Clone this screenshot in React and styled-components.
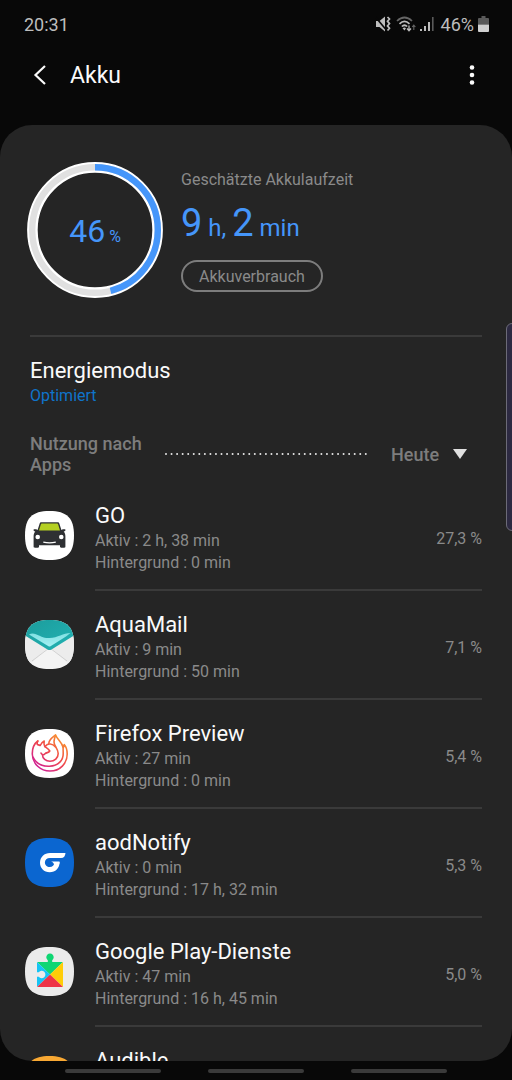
import React from 'react';
import styled, { createGlobalStyle } from 'styled-components';

const GlobalStyle = createGlobalStyle`
  * {
    box-sizing: border-box;
  }

  body {
    margin: 0;
    background: #080808;
    font-family: Roboto, "Liberation Sans", sans-serif;
  }

  h1, h2, p, ul {
    margin: 0;
    padding: 0;
    font-weight: 400;
  }

  button, select {
    margin: 0;
    padding: 0;
    border: 0;
    background: none;
    font-family: inherit;
    cursor: pointer;
  }

  svg {
    display: block;
  }
`

const Screen = styled.div`
  position: relative;
  display: flex;
  flex-direction: column;
  height: 100vh;
  overflow: hidden;
`

const StatusBar = styled.div`
  display: flex;
  align-items: center;
  justify-content: space-between;
  height: 48px;
  padding: 0 23px 0 24px;
  font-size: 18px;
  color: #bdbdbd;
`

const StatusIcons = styled.div`
  display: flex;
  align-items: center;
  gap: 4px;
`

const BatteryLevel = styled.span`
  margin-left: 3px;
`

const Header = styled.header`
  display: flex;
  align-items: center;
  height: 54px;
  margin-bottom: 23px;
  padding: 0 30px;
  color: #fafafa;
`

const IconButton = styled.button`
  display: flex;
  align-items: center;
  justify-content: center;
  width: 20px;
  height: 40px;
  color: inherit;
`

const Title = styled.h1`
  flex: 1;
  padding-left: 20px;
  font-size: 23px;
`

const Panel = styled.main`
  flex: 1;
  min-height: 0;
  overflow: hidden;
  background: #252525;
  border-radius: 32px;
`

const Summary = styled.section`
  display: flex;
  gap: 18px;
  margin: 0 30px;
  padding: 37px 0;
  border-bottom: 2px solid #3a3a3a;
`

const Ring = styled.div`
  display: grid;
  flex: none;
  place-items: center;
  width: 136px;
  height: 136px;
  margin-left: -3px;

  > * {
    grid-area: 1 / 1;
  }
`

const RingValue = styled.p`
  padding-top: 2px;
  font-size: 32px;
  color: #4596fa;
`

const RingUnit = styled.span`
  margin-left: 4px;
  font-size: 16px;
`

const Estimate = styled.div`
  display: flex;
  flex-direction: column;
  align-items: flex-start;
  padding-top: 7px;
`

const Label = styled.p`
  font-size: 16px;
  line-height: 22px;
  color: #8a8a8a;
`

const Duration = styled.p`
  margin: 10px 0;
  font-size: 24px;
  line-height: 44px;
  color: #4596fa;
`

const Big = styled.span`
  font-size: 38px;
`

const PillButton = styled.button`
  height: 32px;
  padding: 0 16px;
  border: 2px solid #7d7d7d;
  border-radius: 16px;
  font-size: 16px;
  color: #8a8a8a;
`

const ModeButton = styled.button`
  display: block;
  width: 100%;
  padding: 20px 30px 0;
  text-align: left;
`

const ModeTitle = styled.span`
  display: block;
  font-size: 22px;
  line-height: 28px;
  color: #fafafa;
`

const ModeValue = styled.span`
  display: block;
  font-size: 16px;
  line-height: 22px;
  color: #0f74cb;
`

const UsageBar = styled.div`
  display: flex;
  align-items: center;
  margin: 26px 30px 7px;
  font-size: 18px;
  font-weight: 500;
  line-height: 21px;
  color: #7d7d7d;
`

const UsageTitle = styled.label`
  width: 134px;
`

const Dots = styled.svg`
  flex: 1;
  min-width: 0;
  height: 4px;
`

const Period = styled.div`
  position: relative;
  width: 91px;
  margin-left: 24px;
`

const PeriodSelect = styled.select`
  width: 100%;
  appearance: none;
  font-size: 18px;
  font-weight: 500;
  line-height: 21px;
  color: #7d7d7d;
`

const PeriodArrow = styled.svg`
  position: absolute;
  top: 5px;
  right: 15px;
  pointer-events: none;
`

const AppList = styled.ul`
  list-style: none;
`

const AppItem = styled.li`
  display: flex;
  gap: 21px;
  padding: 0 30px 0 25px;
`

const AppIcon = styled.svg`
  flex: none;
  width: 49px;
  height: 49px;
  margin-top: 29px;
`

const AppBody = styled.div`
  display: flex;
  flex: 1;
  align-items: center;
  justify-content: space-between;
  padding: 20px 0 15px;
  border-bottom: 2px solid #3a3a3a;
`

const AppText = styled.div`
  align-self: flex-start;
`

const AppName = styled.h2`
  font-size: 22px;
  line-height: 28px;
  color: #fafafa;
`

const Share = styled.p`
  font-size: 16px;
  color: #8a8a8a;
`

const NavBar = styled.nav`
  display: flex;
  align-items: center;
  justify-content: center;
  gap: 47px;
  height: 19px;
`

const NavButton = styled.button`
  width: 96px;
  height: 4px;
  border-radius: 2px;
  background: #3a3a3a;
`

const EdgeHandle = styled.div`
  position: absolute;
  top: 323px;
  right: -8px;
  width: 14px;
  height: 208px;
  border: 1px solid #6c6b78;
  border-radius: 6px;
  background: #2d2a42;
`

const SQUIRCLE = 'M24.5 0C42 0 49 7 49 24.5S42 49 24.5 49S0 42 0 24.5S7 0 24.5 0Z'

const GoIcon = () => (
  <>
    <path d={SQUIRCLE} fill="#fff" />
    <path d="M16.5 11.3h16c1 0 1.600.5 1.900 1.400l2 6.400 1.400-.8h2.500v1.600l-1.600.7c1.200 1.400 1.700 3 1.700 5v10c0 .8-.4 1.200-1.200 1.200h-3c-.8 0-1.200-.4-1.200-1.200v-1.400H14v1.400c0 .8-.4 1.200-1.200 1.200h-3c-.8 0-1.200-.4-1.200-1.200v-10c0-2 .5-3.600 1.700-5l-1.600-.7v-1.600h2.500l1.400.8 2-6.400c.3-.9.9-1.400 1.900-1.400z" fill="#2e3033" />
    <path d="M17.2 12.4h14.600c.8 0 1.200.3 1.400 1l1.800 6.200H14l1.800-6.200c.2-.7.6-1 1.400-1z" fill="#b4d022" />
    <circle cx="12.7" cy="26" r="2.3" fill="#fff" />
    <circle cx="36.3" cy="26" r="2.3" fill="#fff" />
    <path d="M18.3 31.2Q24.5 32.4 30.8 31.2" stroke="#fff" strokeWidth="1.3" fill="none" />
  </>
)

const AquaMailIcon = () => (
  <>
    <defs>
      <clipPath id="aqua-clip"><path d={SQUIRCLE} /></clipPath>
      <linearGradient id="aqua-top" x1="0" y1="0" x2="1" y2="1">
        <stop offset="0" stopColor="#1c9c9c" />
        <stop offset="1" stopColor="#22b3b4" />
      </linearGradient>
      <linearGradient id="aqua-wave" x1="0" y1="0" x2="0" y2="1">
        <stop offset="0" stopColor="#7fe0e2" />
        <stop offset="1" stopColor="#a5f0f3" />
      </linearGradient>
    </defs>
    <g clipPath="url(#aqua-clip)">
      <rect width="49" height="49" fill="#f4f4f4" />
      <path d="M0 48L23 28h3L49 48v-33H0z" fill="#ececec" />
      <path d="M7 41L23.5 28.5M42 41L25.5 28.5" stroke="#c9c9c9" strokeWidth=".8" fill="none" />
      <path d="M0 0H49V15.5L26.5 29.5Q24.5 30.5 22.5 29.5L0 15.5Z" fill="url(#aqua-top)" />
      <path d="M4 14.5C10 10.500 15 18.5 24.5 18C33 17.8 38 13 45.5 13L41 16.500L25.500 26.200Q24.500 26.800 23.500 26.200Z" fill="url(#aqua-wave)" />
    </g>
  </>
)

const FirefoxIcon = () => (
  <>
    <defs>
      <linearGradient id="fox-line" gradientUnits="userSpaceOnUse" x1="38" y1="8" x2="12" y2="38">
        <stop offset="0" stopColor="#f8982c" />
        <stop offset=".5" stopColor="#f0484a" />
        <stop offset="1" stopColor="#cf1f94" />
      </linearGradient>
    </defs>
    <path d={SQUIRCLE} fill="#fff" />
    <g fill="none" stroke="url(#fox-line)" strokeWidth="1.6" strokeLinejoin="round" strokeLinecap="round">
      <path d="M12.8 12C12 13.500 12 14.500 12.300 15.500C13.500 15.800 14.500 16 15.200 16.500C16 14.500 17.500 13 19.200 12C18.800 14 19 16 19.800 17.500C21.500 18.800 23.500 19.800 24.800 22C23.500 24 21.500 23.200 20 24.800C18.500 26.500 16.500 25.500 16 24" />
      <path d="M12.800 12C9.500 14.500 7.200 19.500 7.300 25C7.600 35 15.500 42 25 42C35 42 42.200 34.500 42.200 25C42.200 20.500 41 17.500 39.200 15.500C39.200 17 38.800 18 38.200 18.500C36.800 12.500 33 11.500 30.500 6C27.500 8.500 24 10.500 23.800 14.500" />
      <path d="M17.500 26C17.500 29.500 20.800 32.300 25 32.300C29.500 32.300 33.200 29 33.200 24.500C33.200 19.500 29 17.500 29 13C29 10.500 30 8.500 30.500 6" />
      <path d="M8 28C11 34.500 17.500 37.500 24.500 37.200C33.500 36.800 38.500 31 38.200 24C38.200 21.500 38 20 38.200 18.500" />
      <path d="M20.500 17C23 14 27.500 14.500 30.500 18" />
    </g>
  </>
)

const AodIcon = () => (
  <>
    <path d={SQUIRCLE} fill="#0b66d0" />
    <path d="M25 15H40.5C40.2 18 39 20 36 20H25C21.8 20 19.9 22 19.9 24.5C19.900 27 22 29 24.7 29C27.5 29 29.3 27.2 29.3 24.7V24H34.5V24.7C34.5 30 30.5 34.2 24.7 34.2C19 34.2 15 30 15 24.7C15 19 19.3 15 25 15Z" fill="#fff" />
    <path d="M26 23.5H34.5V25.5C33.500 28 31 27.5 29 27.5C29.3 25.5 28 24 26 23.5Z" fill="#fff" />
  </>
)

const PlayServicesIcon = () => (
  <>
    <defs>
      <clipPath id="play-clip">
        <path d="M13 15H22.8V13.2A3.700 3.700 0 1 1 27.2 13.2V15H37C37.7 15 38 15.3 38 16V39C38 39.7 37.7 40 37 40H13C12.3 40 12 39.7 12 39V29.800H13.800A3.700 3.700 0 1 0 13.800 25.200H12V16C12 15.3 12.3 15 13 15Z" />
      </clipPath>
    </defs>
    <path d={SQUIRCLE} fill="#ebebeb" />
    <g clipPath="url(#play-clip)">
      <path d="M12 5H38V15L25 27.5L12 15Z" fill="#0fd673" />
      <path d="M12 15L25 27.5L12 40Z" fill="#15c4f5" />
      <path d="M38 15L25 27.5L38 40Z" fill="#ffcd08" />
      <path d="M12 40L25 27.5L38 40Z" fill="#ee3447" />
    </g>
  </>
)

const AudibleIcon = () => <path d={SQUIRCLE} fill="#f8a833" />

const apps = [
  { name: 'GO', active: '2 h, 38 min', background: '0 min', share: '27,3 %', Icon: GoIcon },
  { name: 'AquaMail', active: '9 min', background: '50 min', share: '7,1 %', Icon: AquaMailIcon },
  { name: 'Firefox Preview', active: '27 min', background: '0 min', share: '5,4 %', Icon: FirefoxIcon },
  { name: 'aodNotify', active: '0 min', background: '17 h, 32 min', share: '5,3 %', Icon: AodIcon },
  { name: 'Google Play-Dienste', active: '47 min', background: '16 h, 45 min', share: '5,0 %', Icon: PlayServicesIcon },
  { name: 'Audible', Icon: AudibleIcon },
]

const AppRow = ({ name, active, background, share, Icon }) => (
  <AppItem>
    <AppIcon viewBox="0 0 49 49" aria-hidden="true">
      <Icon />
    </AppIcon>
    <AppBody>
      <AppText>
        <AppName>{name}</AppName>
        {active && <Label>Aktiv : {active}</Label>}
        {background && <Label>Hintergrund : {background}</Label>}
      </AppText>
      {share && <Share>{share}</Share>}
    </AppBody>
  </AppItem>
)

const MuteIcon = () => (
  <svg width="17" height="18" viewBox="0 0 17 18" aria-hidden="true">
    <path d="M1 6h3.500L10 1.500v15L4.500 12H1z" fill="#bdbdbd" />
    <path d="M0 1.500L10.500 14" stroke="#080808" strokeWidth="1.6" />
    <path d="M12.500 2l2 2-2 2.300 2 2.300-2 2.300 2 2.300-2 2.300" stroke="#bdbdbd" strokeWidth="1.700" fill="none" />
  </svg>
)

const WifiIcon = () => (
  <svg width="20" height="18" viewBox="0 0 20 18" fill="none" aria-hidden="true">
    <path d="M1 6Q8.500-1 16 6" stroke="#666" strokeWidth="1.700" />
    <path d="M3.500 8.800Q8.500 4 13.500 8.800M5.800 11.500Q8.500 9 11.200 11.500" stroke="#bdbdbd" strokeWidth="1.700" />
    <path d="M8.500 15.500l-2-2.300q2-1.500 3.500 0z" fill="#bdbdbd" />
    <path d="M13 10.500v5M11 13.500l2 2.300 2-2.300" stroke="#bdbdbd" strokeWidth="1.300" />
    <path d="M17.800 15V10.500M16.200 12l1.600-1.800 1.600 1.800" stroke="#666" strokeWidth="1.100" />
  </svg>
)

const SignalIcon = () => (
  <svg width="14" height="16" viewBox="0 0 14 16" aria-hidden="true">
    <path d="M0 13h2v2H0zM4 10h2v5H4zM8 6h2v9H8z" fill="#bdbdbd" />
    <path d="M12 1h1.600v14H12z" fill="#5a5a5a" />
  </svg>
)

const BatteryIcon = () => (
  <svg width="11" height="16" viewBox="0 0 11 16" aria-hidden="true">
    <path d="M3.500 0h4v2H10q1 0 1 1v5.500H0V3q0-1 1-1h2.500z" fill="#5a5a5a" />
    <path d="M0 8.500h11V15q0 1-1 1H1q-1 0-1-1z" fill="#d0d0d0" />
  </svg>
)

const App = () => (
  <>
    <GlobalStyle />
    <Screen>
      <StatusBar>
        <span>20:31</span>
        <StatusIcons>
          <MuteIcon />
          <WifiIcon />
          <SignalIcon />
          <BatteryLevel>46%</BatteryLevel>
          <BatteryIcon />
        </StatusIcons>
      </StatusBar>

      <Header>
        <IconButton aria-label="Zurück">
          <svg width="14" height="20" viewBox="0 0 14 20" fill="none" aria-hidden="true">
            <path d="M12 1L2.500 10L12 19" stroke="currentColor" strokeWidth="2.200" />
          </svg>
        </IconButton>
        <Title>Akku</Title>
        <IconButton aria-label="Weitere Optionen">
          <svg width="6" height="20" viewBox="0 0 6 20" fill="currentColor" aria-hidden="true">
            <circle cx="3" cy="2.500" r="2.300" />
            <circle cx="3" cy="10" r="2.300" />
            <circle cx="3" cy="17.500" r="2.300" />
          </svg>
        </IconButton>
      </Header>

      <Panel>
        <Summary>
          <Ring>
            <svg width="136" height="136" viewBox="0 0 136 136" fill="none" aria-hidden="true">
              <circle cx="68" cy="68" r="62.600" stroke="#fff" strokeWidth="10.600" />
              <circle cx="68" cy="68" r="62.800" stroke="#e0e0e0" strokeWidth="6.400" />
              <circle
                cx="68"
                cy="68"
                r="62.800"
                stroke="#4596fa"
                strokeWidth="6.400"
                pathLength="100"
                strokeDasharray="46 54"
                transform="rotate(-90 68 68)"
              />
            </svg>
            <RingValue>46<RingUnit>%</RingUnit></RingValue>
          </Ring>
          <Estimate>
            <Label>Geschätzte Akkulaufzeit</Label>
            <Duration><Big>9</Big> h, <Big>2</Big> min</Duration>
            <PillButton>Akkuverbrauch</PillButton>
          </Estimate>
        </Summary>

        <ModeButton>
          <ModeTitle>Energiemodus</ModeTitle>
          <ModeValue>Optimiert</ModeValue>
        </ModeButton>

        <UsageBar>
          <UsageTitle htmlFor="period">Nutzung nach Apps</UsageTitle>
          <Dots aria-hidden="true">
            <line x1="2" y1="2" x2="100%" y2="2" stroke="#e6e6e6" strokeWidth="2" strokeLinecap="round" strokeDasharray="0 5.550" />
          </Dots>
          <Period>
            <PeriodSelect id="period" defaultValue="Heute">
              <option>Heute</option>
            </PeriodSelect>
            <PeriodArrow width="14" height="10" viewBox="0 0 14 10" aria-hidden="true">
              <path d="M0 0H14L7 10Z" fill="#e0e0e0" />
            </PeriodArrow>
          </Period>
        </UsageBar>

        <AppList>
          {apps.map((app) => (
            <AppRow key={app.name} {...app} />
          ))}
        </AppList>
      </Panel>

      <NavBar>
        <NavButton aria-label="Letzte Apps" />
        <NavButton aria-label="Startseite" />
        <NavButton aria-label="Zurück" />
      </NavBar>

      <EdgeHandle />
    </Screen>
  </>
)

export default App;
